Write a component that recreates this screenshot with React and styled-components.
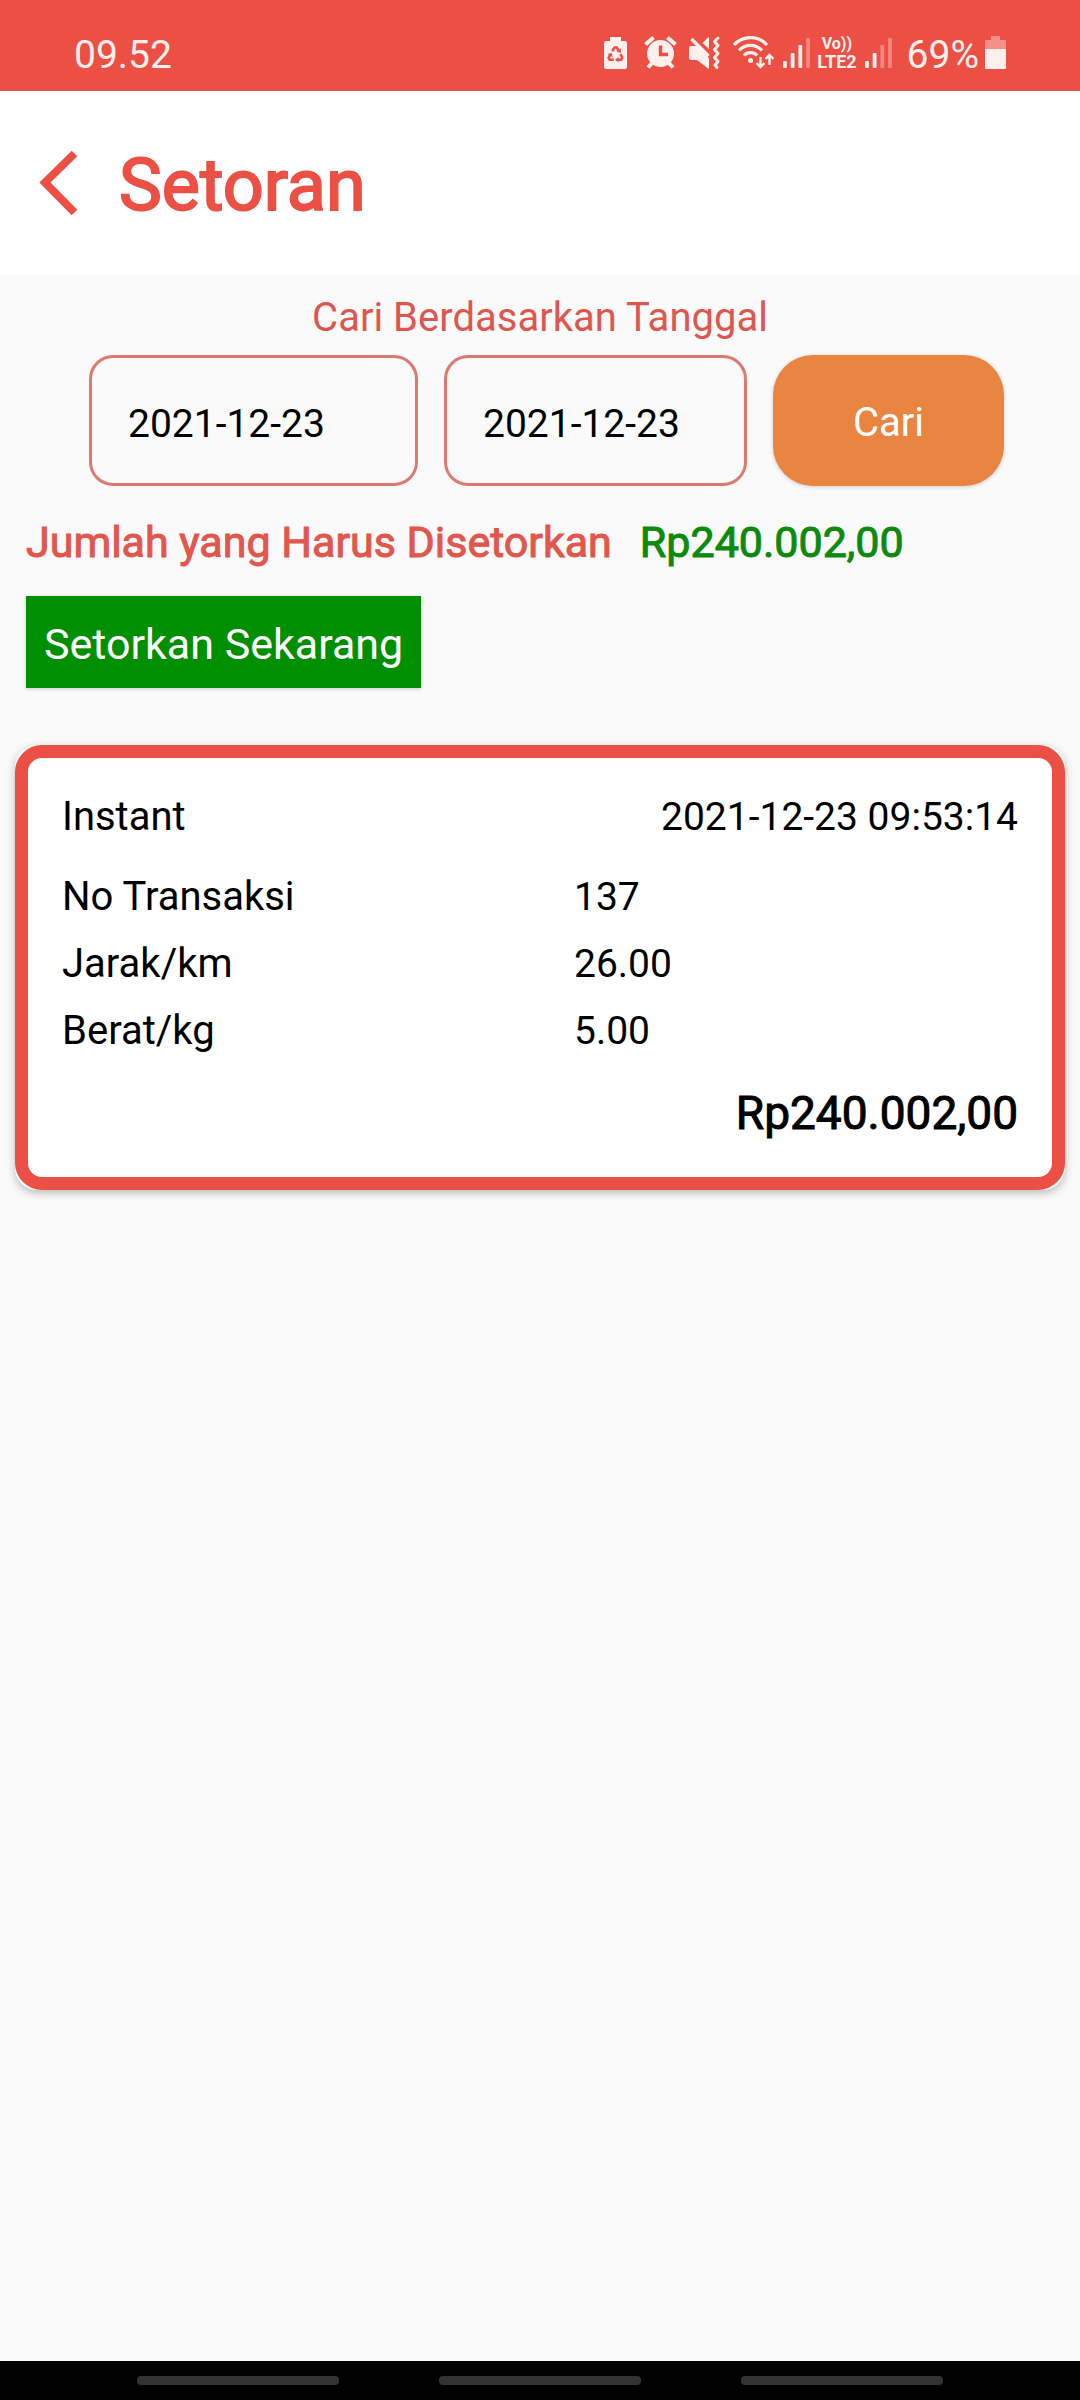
// App.jsx
import styled, { createGlobalStyle } from 'styled-components';

const GlobalStyle = createGlobalStyle`
  * {
    box-sizing: border-box;
  }

  body {
    margin: 0;
    background: #fafafa;
    color: #000;
    font-family: Roboto, "Liberation Sans", sans-serif;
    font-size: 40px;
    line-height: 52px;
  }

  button,
  input {
    font: inherit;
  }
`;

const Screen = styled.div`
  display: flex;
  flex-direction: column;
  min-height: 100vh;
`;

const StatusBar = styled.div`
  display: flex;
  align-items: flex-end;
  justify-content: space-between;
  height: 91px;
  padding: 0 74px 10px;
  background: #ec5044;
  color: #fff0ed;
  font-size: 39px;
`;

const StatusIcons = styled.div`
  display: flex;
  align-items: flex-end;
`;

const StatusIcon = styled.svg`
  display: block;
  height: 33px;
  margin: 0 ${(props) => props.$gap}px 12px 0;
`;

const Carrier = styled.div`
  display: flex;
  flex-direction: column;
  align-items: center;
  margin: 0 8px 10px 0;
  font-size: 18px;
  font-weight: 700;
  line-height: 18px;
`;

const VoiceMark = styled.span`
  font-size: 16px;
`;

const BatteryLevel = styled.span`
  margin-right: 6px;
`;

const Header = styled.header`
  display: flex;
  align-items: center;
  gap: 34px;
  height: 184px;
  padding: 0 36px;
  background: #fff;
  color: #ec5044;
`;

const BackButton = styled.button`
  display: flex;
  padding: 0;
  border: 0;
  background: none;
  color: inherit;
`;

const Title = styled.h1`
  margin: 0;
  padding-top: 6px;
  font-size: 72px;
  font-weight: 400;
  line-height: 84px;
  -webkit-text-stroke: 2px;
`;

const Main = styled.main`
  flex: 1;
  padding: 17px 15px 0;
`;

const SearchLabel = styled.p`
  margin: 0 0 11px;
  color: #de574e;
  text-align: center;
`;

const SearchForm = styled.form`
  display: grid;
  grid-template-columns: 329fr 303fr 231fr;
  gap: 26px;
  padding: 0 61px 0 74px;
`;

const DateInput = styled.input`
  width: 100%;
  min-width: 0;
  height: 131px;
  padding: 6px 0 0 36px;
  border: 3px solid #dc7a72;
  border-radius: 24px;
  background: transparent;
  color: #000;
  font-size: 39px;
`;

const SearchButton = styled.button`
  padding: 4px 0 0;
  border: 0;
  border-radius: 40px;
  background: #e98540;
  box-shadow: 0 1px 4px rgba(0, 0, 0, 0.18);
  color: #fff;
`;

const Total = styled.div`
  display: flex;
  gap: 28px;
  margin: 28px 11px 26px;
  color: #e2564b;
  font-size: 43px;
  line-height: 56px;
  -webkit-text-stroke: 1px;
`;

const TotalAmount = styled.span`
  color: #0b8a0b;
`;

const DepositButton = styled.button`
  display: block;
  height: 92px;
  margin-left: 11px;
  padding: 4px 18px 0;
  border: 0;
  background: #008f00;
  box-shadow: 0 1px 4px rgba(0, 0, 0, 0.2);
  color: #fff;
  font-size: 43px;
`;

const Card = styled.article`
  margin-top: 57px;
  border-radius: 22px;
  background: #fff;
  box-shadow: 0 3px 8px rgba(0, 0, 0, 0.26);
`;

const CardBody = styled.div`
  display: flex;
  flex-direction: column;
  gap: 28px;
  padding: 33px 34px 36px;
  border: 13px solid #ec5044;
  border-radius: 27px;
`;

const CardTop = styled.div`
  display: flex;
  justify-content: space-between;
`;

const Timestamp = styled.time`
  font-size: 39px;
`;

const Details = styled.dl`
  display: grid;
  grid-template-columns: 512fr 444fr;
  row-gap: 15px;
  margin: 0;

  dd {
    margin: 0;
    font-size: 39px;
  }
`;

const Price = styled.div`
  font-size: 46px;
  line-height: 56px;
  text-align: right;
  -webkit-text-stroke: 1px;
`;

const NavBar = styled.nav`
  display: flex;
  justify-content: center;
  gap: 100px;
  height: 39px;
  padding-top: 15px;
  background: #000;
`;

const NavButton = styled.button`
  width: 202px;
  height: 9px;
  padding: 0;
  border: 0;
  border-radius: 4px;
  background: #333;
`;

const BatteryCareIcon = () => (
  <StatusIcon $gap={17} width="23" viewBox="0 0 23 33" fill="currentColor">
    <path d="M6 1h11v4h4a2 2 0 0 1 2 2v24a2 2 0 0 1-2 2H2a2 2 0 0 1-2-2V7a2 2 0 0 1 2-2h4z" />
    <g fill="none" stroke="#ec5044" strokeWidth="2.6">
      <path d="M8.2 15.2l2.3-3.7h2.2l2 3.2" />
      <path d="M16.5 18.2l1.8 3.3-1.2 2.3h-3.3" />
      <path d="M9.8 23.8H5.6l-1-2 1.6-3" />
    </g>
    <path fill="#ec5044" d="M16.8 12.5V17l-4.3-1.2zM14.5 21v5.6l-3.4-2.8zM3.5 18l4.2-1 1 4.2z" />
  </StatusIcon>
);

const AlarmIcon = () => (
  <StatusIcon $gap={12} width="33" viewBox="0 0 33 33">
    <g stroke="currentColor" strokeWidth="4">
      <path d="M1.5 8.5l8-7M31.5 8.5l-8-7M4 31.5l5-5.5M29 31.5l-5-5.5" />
    </g>
    <circle cx="16.5" cy="17.5" r="13.5" fill="currentColor" />
    <path d="M16.5 9.5v9h7.5" fill="none" stroke="#ec5044" strokeWidth="3.4" />
  </StatusIcon>
);

const MuteIcon = () => (
  <StatusIcon $gap={13} width="31" viewBox="0 0 31 33">
    <path d="M2 10h6l12 12v10.5h-1L8 24H2a2 2 0 0 1-2-2V12a2 2 0 0 1 2-2zM13.5 7L19 1.5h1V13z" fill="currentColor" />
    <path d="M2.5 3l17 17" stroke="currentColor" strokeWidth="3.4" />
    <path
      d="M29 2l-3.5 3.5 3.5 4-3.5 4 3.5 4-3.5 4 3.5 4-3 3.5 2 2.5"
      fill="none"
      stroke="currentColor"
      strokeWidth="3"
      strokeLinejoin="round"
      strokeLinecap="round"
    />
  </StatusIcon>
);

const WifiIcon = () => (
  <StatusIcon $gap={9} width="41" viewBox="0 0 41 33" fill="none" stroke="currentColor" strokeWidth="3.2">
    <path d="M1 9a22 22 0 0 1 33 0" />
    <path d="M6 14.5a15.5 15.5 0 0 1 23 0" />
    <path d="M11 19.5a9 9 0 0 1 13 0" />
    <circle cx="17.5" cy="24.5" r="2.5" fill="currentColor" stroke="none" />
    <path strokeWidth="2.4" d="M27.5 21v10M23.5 27l4 4 4-4M36.5 29V19M32.5 23l4-4 4 4" />
  </StatusIcon>
);

const SignalIcon = ({ level }) => (
  <StatusIcon $gap={level === 3 ? 7 : 15} width="27" viewBox="0 0 27 33" fill="currentColor">
    {[7, 15, 23, 30].map((height, i) => (
      <rect
        key={height}
        x={i * 7.7}
        y={32 - height}
        width="3.8"
        height={height}
        rx="1"
        opacity={i < level ? 1 : 0.35}
      />
    ))}
  </StatusIcon>
);

const BatteryIcon = () => (
  <StatusIcon $gap={0} width="21" viewBox="0 0 21 33" fill="currentColor">
    <path opacity="0.4" d="M6 0h9v4h5a1 1 0 0 1 1 1v8H0V5a1 1 0 0 1 1-1h5z" />
    <path d="M0 13h21v19a1 1 0 0 1-1 1H1a1 1 0 0 1-1-1z" />
  </StatusIcon>
);

const App = () => {
  return (
    <Screen>
      <GlobalStyle />
      <StatusBar>
        <span>09.52</span>
        <StatusIcons>
          <BatteryCareIcon />
          <AlarmIcon />
          <MuteIcon />
          <WifiIcon />
          <SignalIcon level={3} />
          <Carrier>
            <VoiceMark>Vo))</VoiceMark>
            <span>LTE2</span>
          </Carrier>
          <SignalIcon level={2} />
          <BatteryLevel>69%</BatteryLevel>
          <BatteryIcon />
        </StatusIcons>
      </StatusBar>

      <Header>
        <BackButton type="button" aria-label="Kembali">
          <svg width="49" height="72" viewBox="0 0 49 72" fill="none" stroke="currentColor" strokeWidth="8">
            <path d="M38.5 6.5L9 35.5l29.5 30" />
          </svg>
        </BackButton>
        <Title>Setoran</Title>
      </Header>

      <Main>
        <SearchLabel>Cari Berdasarkan Tanggal</SearchLabel>
        <SearchForm onSubmit={(e) => e.preventDefault()}>
          <DateInput type="text" aria-label="Tanggal awal" defaultValue="2021-12-23" />
          <DateInput type="text" aria-label="Tanggal akhir" defaultValue="2021-12-23" />
          <SearchButton type="submit">Cari</SearchButton>
        </SearchForm>

        <Total>
          <span>Jumlah yang Harus Disetorkan</span>
          <TotalAmount>Rp240.002,00</TotalAmount>
        </Total>
        <DepositButton type="button">Setorkan Sekarang</DepositButton>

        <Card>
          <CardBody>
            <CardTop>
              <span>Instant</span>
              <Timestamp>2021-12-23 09:53:14</Timestamp>
            </CardTop>
            <Details>
              <dt>No Transaksi</dt>
              <dd>137</dd>
              <dt>Jarak/km</dt>
              <dd>26.00</dd>
              <dt>Berat/kg</dt>
              <dd>5.00</dd>
            </Details>
            <Price>Rp240.002,00</Price>
          </CardBody>
        </Card>
      </Main>

      <NavBar>
        <NavButton type="button" aria-label="Aplikasi terbaru" />
        <NavButton type="button" aria-label="Beranda" />
        <NavButton type="button" aria-label="Kembali ke layar sebelumnya" />
      </NavBar>
    </Screen>
  );
};

export default App;
